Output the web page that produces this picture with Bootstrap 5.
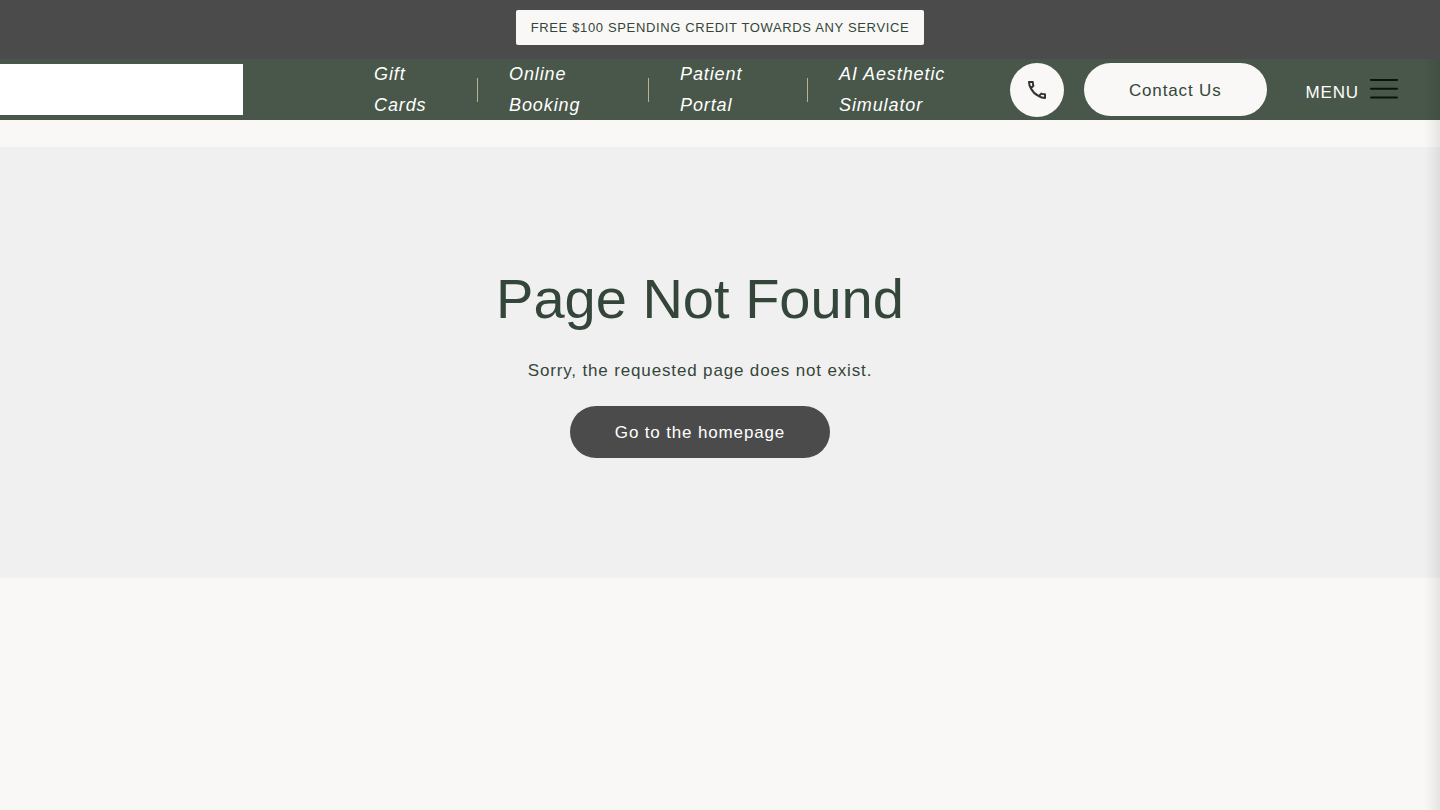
<!DOCTYPE html>
<html lang="en">
<head>
<meta charset="utf-8">
<meta name="viewport" content="width=device-width, initial-scale=1">
<title>Page Not Found</title>
<link href="https://cdn.jsdelivr.net/npm/bootstrap@5.3.0/dist/css/bootstrap.min.css" rel="stylesheet">
<style>
  body { background: #f9f8f6; color: #34463a; font: 17px/31px "Liberation Sans", Arial, sans-serif; }
  .promo-link, .quick-links a, .error-area p, .pill-btn, .menu-btn { letter-spacing: .05em; }
  .promo-bar { background: #4b4b4b; padding: 10px 16px 14px; }
  .promo-link { background: #f9f8f6; color: #34463a; font-size: 13px; line-height: 35px; padding: 0 15px; border-radius: 2px; }
  .site-header { background: #485749; height: 61px; padding-right: 42px; }
  .logo-box { width: 243px; height: 51px; background: #fff; }
  .quick-links { padding-left: 131px; font-size: 18px; font-style: italic; }
  .quick-links a { color: #fff; }
  .quick-links li { flex: 0 1 171px; gap: 30px; padding-left: 31px; }
  .quick-links li:first-child { flex-basis: 104px; padding-left: 0; }
  .quick-links li:nth-child(3) { flex-basis: 159px; }
  .quick-links .vr { height: 24px; background: #b9b389; opacity: 1; align-self: center; }
  .call-btn { width: 54px; height: 54px; background: #f9f8f6; color: #333; }
  .pill-btn { border-radius: 27px; padding: 2px 45px 0; line-height: 51px; font-size: 17px; }
  .contact-btn { margin: 0 39px 0 20px; }
  .contact-btn, .contact-btn:hover { background: #f9f8f6; color: #34463a; }
  .home-btn, .home-btn:hover { background: #4b4b4b; color: #fff; }
  .home-btn { line-height: 50px; }
  .menu-btn, .menu-btn:hover { color: #fff; }
  .menu-btn { gap: 11px; font-size: 17px; line-height: 31px; }
  .menu-label { padding-top: 6px; }
  .menu-btn svg { margin-bottom: 2px; }
  .error-area { background: #f0f0f0; margin-top: 27px; padding: 116px 40px 120px 0; }
  .error-area h1 { font-size: 56px; line-height: 72px; font-weight: 400; margin-bottom: 20px; }
  .error-area p { margin-bottom: 20px; }
  .edge-shade { top: 59px; width: 16px; background: linear-gradient(to right, rgba(0,0,0,0), rgba(0,0,0,.03) 50%, rgba(0,0,0,.08)); pointer-events: none; }
</style>
</head>
<body>
<div class="promo-bar d-flex justify-content-center">
  <a href="#" class="promo-link text-decoration-none text-uppercase">Free $100 spending credit towards any service</a>
</div>
<header class="site-header d-flex align-items-center">
  <a href="#" class="logo-box flex-shrink-0" aria-label="Home"></a>
  <nav class="flex-grow-1">
    <ul class="quick-links list-unstyled d-flex mb-0">
      <li class="d-flex"><a href="#" class="flex-grow-1 text-decoration-none">Gift Cards</a><span class="vr"></span></li>
      <li class="d-flex"><a href="#" class="flex-grow-1 text-decoration-none">Online Booking</a><span class="vr"></span></li>
      <li class="d-flex"><a href="#" class="flex-grow-1 text-decoration-none">Patient Portal</a><span class="vr"></span></li>
      <li class="d-flex"><a href="#" class="flex-grow-1 text-decoration-none">AI Aesthetic Simulator</a></li>
    </ul>
  </nav>
  <a href="#" class="call-btn rounded-circle d-flex flex-shrink-0 align-items-center justify-content-center" aria-label="Call us">
    <svg width="24" height="24" viewBox="0 0 24 24" fill="none" stroke="currentColor" stroke-width="2" stroke-linejoin="round" aria-hidden="true"><path d="M4 4h3.8c0 1.400.2 2.500.6 3.700L5.800 10.200C4.600 8.300 4.100 6.200 4 4zM5.800 10.200c1.800 3.500 4.500 6.200 8 8M13.800 18.200l2.500-2.600c1.200.4 2.300.6 3.700.6V20c-2.200-.1-4.300-.6-6.200-1.800z"/></svg>
  </a>
  <a href="#" class="btn border-0 pill-btn contact-btn flex-shrink-0">Contact Us</a>
  <button type="button" class="menu-btn btn border-0 p-0 d-flex flex-shrink-0 align-items-center">
    <span class="menu-label">MENU</span>
    <svg width="28" height="20" viewBox="0 0 28 20" stroke="#07140b" stroke-width="2" stroke-linecap="round" aria-hidden="true"><path d="M1 .9h26M1 9.800h26M1 18.600h26"/></svg>
  </button>
</header>
<main class="error-area text-center">
  <h1>Page Not Found</h1>
  <p>Sorry, the requested page does not exist.</p>
  <a href="#" class="btn border-0 pill-btn home-btn">Go to the homepage</a>
</main>
<div class="edge-shade position-fixed end-0 bottom-0"></div>
<script src="https://cdn.jsdelivr.net/npm/bootstrap@5.3.0/dist/js/bootstrap.bundle.min.js"></script>
</body>
</html>
